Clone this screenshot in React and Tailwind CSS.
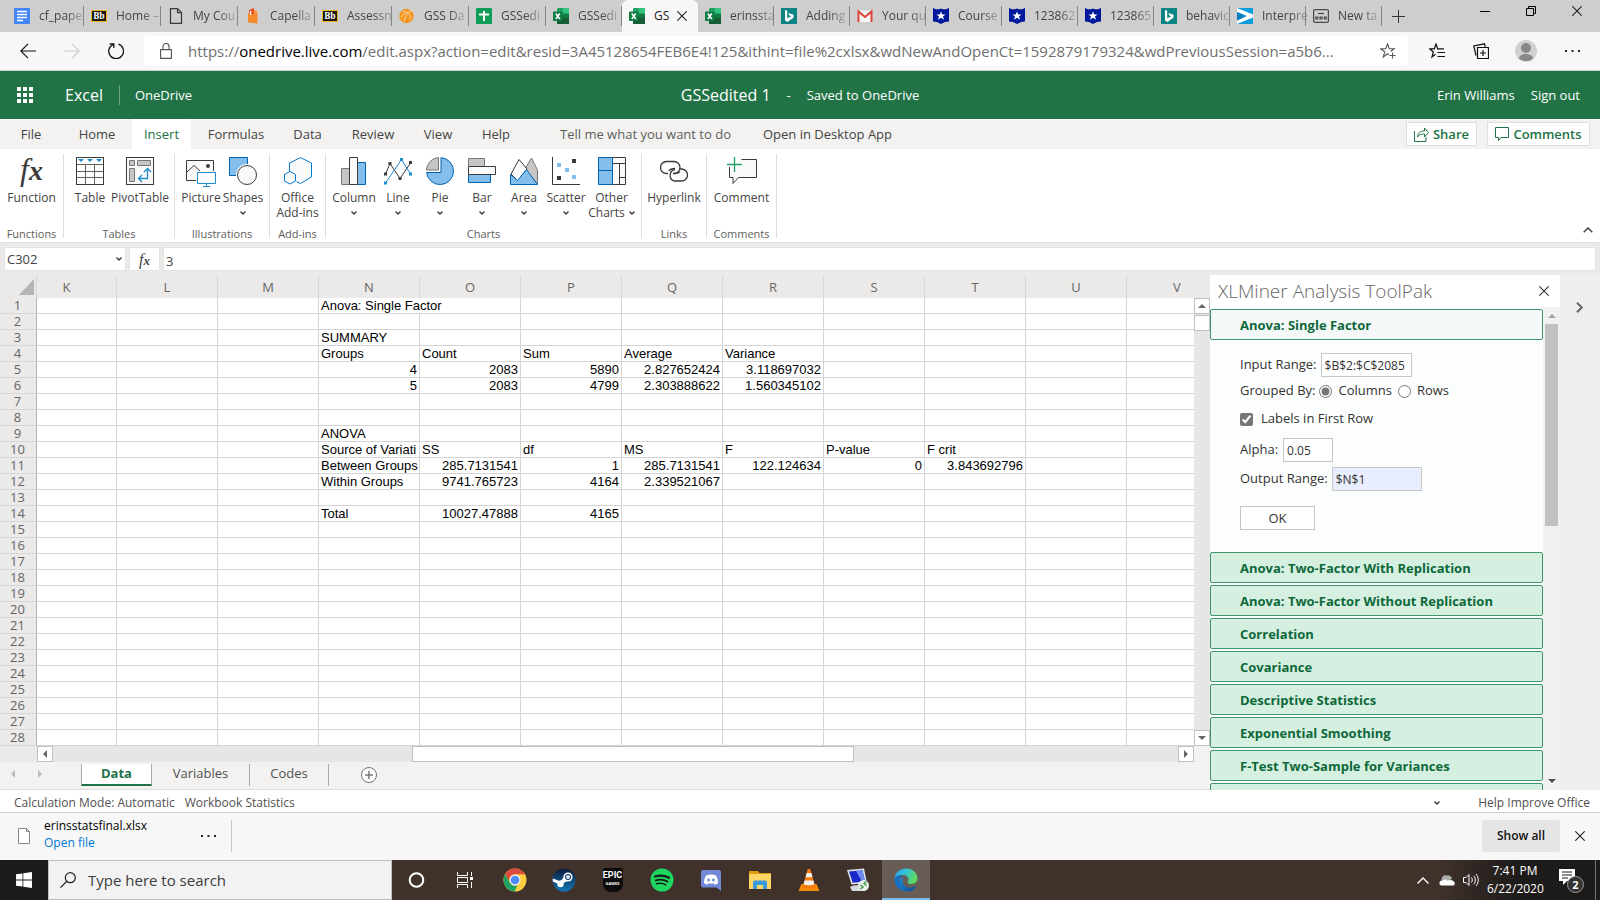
import React from "react";
import clsx from "clsx";

/* ---------- data ---------- */

const leftTabs = [
  { icon: "docs", title: "cf_pape" },
  { icon: "bb", title: "Home –" },
  { icon: "page", title: "My Cou" },
  { icon: "capella", title: "Capella" },
  { icon: "bb", title: "Assessn" },
  { icon: "gss", title: "GSS Da" },
  { icon: "sheets", title: "GSSedi" },
];

const rightTabs = [
  { icon: "excel", title: "GSSedi" },
  { icon: "excel", title: "GS", active: true },
  { icon: "excel", title: "erinssta" },
  { icon: "bing", title: "Adding" },
  { icon: "gmail", title: "Your qu" },
  { icon: "shield", title: "Course" },
  { icon: "shield", title: "123862" },
  { icon: "shield", title: "123865" },
  { icon: "bing", title: "behavic" },
  { icon: "interpret", title: "Interpre" },
  { icon: "newtab", title: "New ta" },
];

const ribbonTabs = [
  { label: "File", width: "w-[62px]" },
  { label: "Home", width: "w-[70px]" },
  { label: "Insert", width: "w-[59px]", active: true },
  { label: "Formulas", width: "w-[90px]" },
  { label: "Data", width: "w-[53px]" },
  { label: "Review", width: "w-[78px]" },
  { label: "View", width: "w-[52px]" },
  { label: "Help", width: "w-[64px]" },
];

const ribbonGroups = [
  { name: "Functions", width: "w-16", items: [{ icon: "fx", lines: ["Function"], width: "w-[63px]" }] },
  {
    name: "Tables",
    width: "w-[111px]",
    items: [
      { icon: "table", lines: ["Table"], width: "w-[42px]" },
      { icon: "pivot", lines: ["PivotTable"], width: "w-[58px]" },
    ],
  },
  {
    name: "Illustrations",
    width: "w-[95px]",
    items: [
      { icon: "picture", lines: ["Picture"], width: "w-[42px]" },
      { icon: "shapes", lines: ["Shapes"], width: "w-[42px]", menu: true },
    ],
  },
  { name: "Add-ins", width: "w-14", items: [{ icon: "office", lines: ["Office", "Add-ins"], width: "w-[55px]" }] },
  {
    name: "Charts",
    width: "w-[316px]",
    items: [
      { icon: "column", lines: ["Column"], width: "w-[46px]", menu: true },
      { icon: "line", lines: ["Line"], width: "w-[42px]", menu: true },
      { icon: "pie", lines: ["Pie"], width: "w-[42px]", menu: true },
      { icon: "bar", lines: ["Bar"], width: "w-[42px]", menu: true },
      { icon: "area", lines: ["Area"], width: "w-[42px]", menu: true },
      { icon: "scatter", lines: ["Scatter"], width: "w-[42px]", menu: true },
      { icon: "other", lines: ["Other", "Charts"], width: "w-[49px]", menu: true },
    ],
  },
  { name: "Links", width: "w-[65px]", items: [{ icon: "link", lines: ["Hyperlink"], width: "w-16" }] },
  { name: "Comments", width: "w-[70px]", items: [{ icon: "comment", lines: ["Comment"], width: "w-[69px]" }] },
];

const columns = ["K", "L", "M", "N", "O", "P", "Q", "R", "S", "T", "U", "V"];

const cells = {
  1: { N: "Anova: Single Factor" },
  3: { N: "SUMMARY" },
  4: { N: "Groups", O: "Count", P: "Sum", Q: "Average", R: "Variance" },
  5: { N: 4, O: 2083, P: 5890, Q: 2.827652424, R: 3.118697032 },
  6: { N: 5, O: 2083, P: 4799, Q: 2.303888622, R: 1.560345102 },
  9: { N: "ANOVA" },
  10: { N: "Source of Variati", O: "SS", P: "df", Q: "MS", R: "F", S: "P-value", T: "F crit" },
  11: { N: "Between Groups", O: 285.7131541, P: 1, Q: 285.7131541, R: 122.124634, S: 0, T: 3.843692796 },
  12: { N: "Within Groups", O: 9741.765723, P: 4164, Q: 2.339521067 },
  14: { N: "Total", O: 10027.47888, P: 4165 },
};

const tools = [
  "Anova: Two-Factor With Replication",
  "Anova: Two-Factor Without Replication",
  "Correlation",
  "Covariance",
  "Descriptive Statistics",
  "Exponential Smoothing",
  "F-Test Two-Sample for Variances",
];

/* ---------- icons ---------- */

const Favicon = ({ name }) => {
  switch (name) {
    case "docs":
      return (
        <svg className="size-4 shrink-0" viewBox="0 0 16 16">
          <rect width="16" height="16" rx="1" fill="#4285f4" />
          <path d="M3 3.5h10M3 6.5h10M3 9.5h10M3 12.5h6" stroke="#fff" strokeWidth="1.4" />
        </svg>
      );
    case "bb":
      return (
        <span className="flex h-3 w-4 shrink-0 items-center justify-center border border-[#f0b41c] bg-[#1c1a16] font-serif text-[9px] leading-none font-bold text-white">
          Bb
        </span>
      );
    case "page":
      return (
        <svg className="size-4 shrink-0" viewBox="0 0 16 16" fill="none" stroke="#3a3a3a" strokeWidth="1.2">
          <path d="M2.5.6h7l4 4v10.8h-11zM9.5.6v4h4" />
        </svg>
      );
    case "capella":
      return (
        <svg className="size-4 shrink-0" viewBox="0 0 16 16">
          <path d="M3 5h9.500v10.500L3 14.500z" fill="#f58a2a" />
          <path d="M4 2l5-2v6L4 7z" fill="#e8501f" />
          <path d="M5.500 3v4" stroke="#fff" strokeWidth="1.500" />
          <path d="M9 2l3.500 1v2H9z" fill="#f9a04a" />
        </svg>
      );
    case "gss":
      return (
        <svg className="size-4 shrink-0" viewBox="0 0 16 16">
          <circle cx="7.5" cy="8" r="7.2" fill="#f7941d" />
          <path d="M2 9c3-4 6-4 7-4s3 3 2 7M9 5c1-2 3-3 4-2M9 5c-2-2-4-2-5-1M8 6l-3 7" stroke="#fbd9a6" fill="none" />
        </svg>
      );
    case "sheets":
      return (
        <svg className="size-4 shrink-0" viewBox="0 0 16 16">
          <rect width="16" height="16" rx="1" fill="#0f9d58" />
          <path d="M8 3v10M3 6.5h10" stroke="#fff" strokeWidth="2" />
        </svg>
      );
    case "excel":
      return (
        <svg className="size-4 shrink-0" viewBox="0 0 16 16">
          <rect x="4" y="0" width="12" height="16" rx="1" fill="#21a366" />
          <path d="M10 0h6v5h-6z" fill="#33c481" />
          <path d="M4 8h12v8H4z" fill="#185c37" />
          <path d="M10 6h6v4h-6z" fill="#107c41" />
          <rect x="0" y="3.5" width="9.5" height="9.5" rx=".8" fill="#107c41" />
          <path d="M2.8 5.5l4 5.5M6.8 5.5l-4 5.5" stroke="#fff" strokeWidth="1.5" />
        </svg>
      );
    case "bing":
      return (
        <svg className="size-4 shrink-0" viewBox="0 0 16 16">
          <rect width="16" height="16" fill="#0c8484" />
          <path d="M4 2l2.2.8v7.4l4-2-2-1-.9-2.3 5.2 1.9v3L6.3 14 4 12.6z" fill="#fff" />
        </svg>
      );
    case "gmail":
      return (
        <svg className="size-4 shrink-0" viewBox="0 0 16 16">
          <rect x="1" y="2.5" width="14" height="11.5" fill="#f4f4f4" />
          <path d="M1.5 14V3.5L8 9l6.500-5.500V14" fill="none" stroke="#db4437" strokeWidth="2" />
        </svg>
      );
    case "shield":
      return (
        <svg className="size-4 shrink-0" viewBox="0 0 16 16">
          <path d="M0 0c3 1.600 5 1.600 8 .4C11 1.600 13 1.600 16 0v13.500c-3 0-5 .8-8 2.500-3-1.700-5-2.500-8-2.500z" fill="#00189c" />
          <path d="M8 3.500l1.300 3h3.200L10 8.500l1 3.200-3-1.900-3 1.900 1-3.200-2.500-2h3.200z" fill="#fff" />
        </svg>
      );
    case "interpret":
      return (
        <svg className="size-4 shrink-0" viewBox="0 0 16 16">
          <rect width="16" height="16" fill="#0f9bdc" />
          <path d="M0 0l16 6.500v3L0 16v-3.500L9.500 8 0 4z" fill="#fff" />
          <path d="M0 4l9.500 4L0 12.500z" fill="#0c7fc0" />
        </svg>
      );
    default:
      return (
        <svg className="size-4 shrink-0" viewBox="0 0 16 16" fill="none" stroke="#4a4a4a" strokeWidth="1.2">
          <rect x=".6" y="1.600" width="14.800" height="12.800" rx="1.500" />
          <path d="M5 5.500h6" />
          <path d="M2.800 9.100h1.900v1.900H2.800zM7 9.100h2v1.900H7zM11.300 9.100h1.900v1.900h-1.900z" />
        </svg>
      );
  }
};

const RibbonIcon = ({ name }) => {
  const dark = "#3b3a39";
  const blue = "#1e8bcd";
  switch (name) {
    case "fx":
      return (
        <span className="flex items-baseline font-['Liberation_Serif',serif] leading-6 text-[#3b3a39] italic">
          <span className="text-[32px]">f</span>
          <span className="text-[28px] font-bold">x</span>
        </span>
      );
    case "table":
      return (
        <svg className="size-7" viewBox="0 0 28 28" fill="none">
          <rect x=".5" y=".5" width="27" height="27" fill="#fff" stroke={dark} />
          <path d="M1 7.500h26M1 14.500h26M1 20.500h26M9.500 8v19M18.500 8v19" stroke="#605e5c" />
          <path d="M2 2h6l-3 3zM11 2h6l-3 3zM20 2h6l-3 3z" fill={blue} />
        </svg>
      );
    case "pivot":
      return (
        <svg className="size-7" viewBox="0 0 28 28" fill="none">
          <rect x=".5" y=".5" width="27" height="27" fill="#fafafa" stroke={dark} />
          <path d="M3.500 3.500h5v5h-5zM11.500 3.500h13v5h-13zM3.500 11.500h5v13h-5z" fill="#c8c6c4" stroke="#797775" />
          <path d="M13 21.500h8.500v-9M16 18l-3.500 3.500L16 25M18 15l3.500-3.500L25 15" stroke={blue} strokeWidth="1.300" />
        </svg>
      );
    case "picture":
      return (
        <svg className="h-[30px] w-[30px]" viewBox="0 0 30 30" fill="none">
          <path d="M10 23.500H.5v-20h27V14" fill="#fafafa" stroke={dark} />
          <path d="M1 15l7-6.500 6 5.500" stroke={dark} />
          <circle cx="22" cy="9" r="2" fill={dark} />
          <path d="M11.500 15.500h18v11h-18z" fill="#fff" stroke={blue} />
          <path d="M20.500 27v2.500M17 29.500h7" stroke={blue} />
        </svg>
      );
    case "shapes":
      return (
        <svg className="size-7" viewBox="0 0 28 28" fill="none">
          <path d="M.5.5h18v18H.5z" fill="#83beec" stroke="#0063b1" />
          <circle cx="18" cy="18" r="11" fill="#fff" />
          <circle cx="18" cy="18" r="9.500" fill="#fafafa" stroke={dark} />
        </svg>
      );
    case "office":
      return (
        <svg className="size-7" viewBox="0 0 28 28" fill="none" stroke="#0078d4">
          <path d="M5.500 14.500v-8.500L16.500.6 27.500 6v14L16.500 26.500l-4-1.800" fill="#fafafa" />
          <path d="M6 14.500l5.500 3v6.500l-5.500 3-5.500-3v-6.500z" fill="#fff" />
        </svg>
      );
    case "column":
      return (
        <svg className="size-7" viewBox="0 0 28 28" fill="none">
          <path d="M1.500 11.500h8v16h-8z" fill="#c8c6c4" stroke="#797775" />
          <path d="M17.500 5.500h8v22h-8z" fill="#83beec" stroke="#0063b1" />
          <path d="M9.500.5h8v27h-8z" fill="#fafafa" stroke={dark} />
        </svg>
      );
    case "line":
      return (
        <svg className="size-7" viewBox="0 0 28 28" fill="none">
          <path d="M1.500 17L6 6.500 16 21.500 26.500 6" stroke={dark} />
          <path d="M1.500 26L17.500 2.500 26.500 17" stroke={blue} />
          <path d="M0 15.500h3v3H0zM4.500 5h3v3h-3zM14.500 20h3v3h-3zM25 4h3v3h-3z" fill={dark} />
          <path d="M0 24.500h3v3H0zM16 1h3v3h-3zM25 15.500h3v3h-3z" fill={blue} />
        </svg>
      );
    case "pie":
      return (
        <svg className="size-7" viewBox="0 0 28 28" fill="none">
          <path d="M15 .6A13.500 13.500 0 1 1 .6 15.500H15z" fill="#83beec" stroke="#0063b1" />
          <path d="M12.500.5v12.500H.5A13 13 0 0 1 12.500.5z" fill="#c8c6c4" stroke="#797775" />
        </svg>
      );
    case "bar":
      return (
        <svg className="size-7" viewBox="0 0 28 28" fill="none">
          <path d="M.5 1.500h16v8H.5z" fill="#c8c6c4" stroke="#797775" />
          <path d="M.5 17.500h22v8H.5z" fill="#83beec" stroke="#0063b1" />
          <path d="M.5 9.500h27v8H.5z" fill="#fafafa" stroke={dark} />
        </svg>
      );
    case "area":
      return (
        <svg className="size-7" viewBox="0 0 28 28" fill="none">
          <path d="M15 12L21.500 1l6 12v14z" fill="#c8c6c4" stroke="#797775" />
          <path d="M1 17L9 2.500 17 12 8 24z" fill="#fafafa" stroke={dark} />
          <path d="M.5 27.500V17.500l7 6 9-11 11 15z" fill="#83beec" stroke="#0063b1" />
        </svg>
      );
    case "scatter":
      return (
        <svg className="size-7" viewBox="0 0 28 28">
          <path d="M.5 0v27.500H28" fill="none" stroke={dark} />
          <path d="M5 6h4v4H5zM13 11h4v4h-4zM20 18h4v4h-4z" fill="#83beec" />
          <path d="M20 2h4v4h-4zM5 19h4v4H5z" fill={dark} />
        </svg>
      );
    case "other":
      return (
        <svg className="size-7" viewBox="0 0 28 28" fill="none">
          <path d="M14.500.5h13v27h-13zM14.500 6.500h13M21.500 6.500v21M21.500 20.500h6" fill="#fafafa" stroke={dark} />
          <path d="M.5.5h14v27H.5zM.5 13.500h14" fill="#83beec" stroke="#0063b1" />
        </svg>
      );
    case "link":
      return (
        <svg className="size-7" viewBox="0 0 28 28" fill="none" stroke={dark} strokeWidth="1.300">
          <path d="M8 16.500h-1.500a6 6 0 0 1 0-12H14a6 6 0 0 1 0 12h-1" />
          <path d="M15 12.500a6 6 0 0 0-1 11.500h7.500a6 6 0 0 0 0-12H20" />
          <path d="M9 14c1-2 3-2.500 6-2.500M20 14.500c-1 1.800-3 2-6 2" />
        </svg>
      );
    default:
      return (
        <svg className="h-[30px] w-[30px]" viewBox="0 0 30 30" fill="none">
          <path d="M14.500 2.500h15v18H11.500L6 26.500v-6H2.500V10" fill="#fafafa" stroke={dark} />
          <path d="M7.500 0v15M0 7.500h15" stroke="#fff" strokeWidth="4" />
          <path d="M7.500 0v15M0 7.500h15" stroke="#21a366" strokeWidth="1.300" />
        </svg>
      );
  }
};

const Caret = ({ className }) => (
  <svg className={clsx("h-1 w-[6px]", className)} viewBox="0 0 6 4" fill="none" stroke="#3b3a39" strokeWidth="1.400">
    <path d="M.5.5L3 3 5.500.5" />
  </svg>
);

const Cross = ({ className }) => (
  <svg className={clsx("size-[10px]", className)} viewBox="0 0 10 10" stroke="currentColor" strokeWidth="1.100">
    <path d="M.3.3l9.400 9.400M9.700.3L.3 9.700" />
  </svg>
);

const arrowPaths = {
  up: "M0 6l4-4 4 4z",
  down: "M0 2l4 4 4-4z",
  left: "M6 0v8L2 4z",
  right: "M2 0v8l4-4z",
};

const Arrow = ({ dir, className }) => (
  <svg className={clsx("size-2", className)} viewBox="0 0 8 8" fill="currentColor">
    <path d={arrowPaths[dir]} />
  </svg>
);

const ScrollButton = ({ dir }) => (
  <button
    aria-label={`Scroll ${dir}`}
    className="flex size-4 shrink-0 items-center justify-center border border-[#c0c0c0] bg-white text-[#666]"
  >
    <Arrow dir={dir} />
  </button>
);

const Dots = ({ className }) => (
  <svg className={clsx("h-[2px] w-[15px]", className)} viewBox="0 0 15 2" fill="currentColor">
    <path d="M0 0h2v2H0zM6.500 0h2v2h-2zM13 0h2v2h-2z" />
  </svg>
);

/* ---------- browser chrome ---------- */

const BrowserTab = ({ tab, width }) => (
  <div
    className={clsx(
      "relative flex h-8 shrink-0 items-center",
      width,
      tab.active ? "rounded-t-md bg-[#f7f7f7]" : "text-[#444]"
    )}
  >
    <button className="flex min-w-0 flex-1 items-center gap-[9px] pl-[7px]">
      <Favicon name={tab.icon} />
      <span
        className={clsx(
          "text-xs leading-5 whitespace-nowrap",
          !tab.active && "[mask-image:linear-gradient(to_right,#000_60%,#0004)]"
        )}
      >
        {tab.title}
      </span>
    </button>
    {tab.active ? (
      <button aria-label="Close tab" className="absolute right-[11px]">
        <Cross className="size-[9px]" />
      </button>
    ) : (
      <span className="h-5 w-px shrink-0 bg-[#858585]" />
    )}
  </div>
);

const TabStrip = () => (
  <div className="flex h-8 bg-[#cecece] pl-[7px]">
    {leftTabs.map((tab, i) => (
      <BrowserTab key={i} tab={tab} width="w-[77px]" />
    ))}
    {rightTabs.map((tab, i) => (
      <BrowserTab key={i} tab={tab} width="w-[76px]" />
    ))}
    <button aria-label="New tab" className="ml-[10px] self-center">
      <svg className="size-[13px]" viewBox="0 0 13 13" stroke="#333">
        <path d="M6.500 0v13M0 6.500h13" />
      </svg>
    </button>
    <div className="mr-[18px] ml-auto flex h-[22px] items-center gap-9">
      <button aria-label="Minimize" className="h-px w-[10px] bg-black" />
      <button aria-label="Restore">
        <svg className="size-[10px]" viewBox="0 0 10 10" fill="none" stroke="#000">
          <path d="M.5 2.500h7v7h-7zM2.500 2.500v-2h7v7h-2" />
        </svg>
      </button>
      <button aria-label="Close">
        <Cross />
      </button>
    </div>
  </div>
);

const AddressBar = () => (
  <div className="flex h-[39px] items-center border-b border-[#cfcfcf] bg-[#f7f7f7] pr-5 pl-5 text-[#222]">
    <button aria-label="Back">
      <svg className="size-4" viewBox="0 0 16 16" fill="none" stroke="#111" strokeWidth="1.200">
        <path d="M16 8H1M8 .8L.8 8 8 15.200" />
      </svg>
    </button>
    <button aria-label="Forward" className="ml-7">
      <svg className="size-4" viewBox="0 0 16 16" fill="none" stroke="#ccc" strokeWidth="1.200">
        <path d="M0 8h15M8 .8L15.200 8 8 15.200" />
      </svg>
    </button>
    <button aria-label="Refresh" className="ml-7">
      <svg className="size-4" viewBox="0 0 16 16" fill="none" stroke="#111" strokeWidth="1.300">
        <path d="M10.500 1.200A7.400 7.400 0 1 1 5 1.500M1.500.8h4.300v4.300" />
      </svg>
    </button>
    <div className="ml-5 flex h-[30px] min-w-0 flex-1 items-center rounded bg-white pr-3 pl-4">
      <svg className="h-4 w-3 shrink-0" viewBox="0 0 12 16" fill="none" stroke="#555" strokeWidth="1.100">
        <path d="M.6 6.600h10.800v8.800H.6zM3 6.500V3.500a3 3 0 0 1 6 0v3" />
      </svg>
      <p className="ml-4 flex-1 overflow-hidden text-[15px] leading-6 whitespace-nowrap text-[#6f6f6f]">
        https://<span className="text-black">onedrive.live.com</span>
        /edit.aspx?action=edit&amp;resid=3A45128654FEB6E4!125&amp;ithint=file%2cxlsx&amp;wdNewAndOpenCt=1592879179324&amp;wdPreviousSession=a5b6...
      </p>
      <button aria-label="Add to favorites">
        <svg className="size-4" viewBox="0 0 16 16" fill="none" stroke="#555" strokeWidth="1.100">
          <path d="M9 11.500L7.500 10.700 3.200 14l1.500-5.200L.8 5.800h4.900L7.500 1l1.800 4.800h4.900l-3.500 2.700M12.500 9.500v6M9.500 12.500h6" />
        </svg>
      </button>
    </div>
    <button aria-label="Favorites" className="ml-[21px]">
      <svg className="size-4" viewBox="0 0 16 16" fill="none" stroke="#111" strokeWidth="1.200">
        <path d="M6.500 11.300L3 14l1.300-5L.8 5.800h4.500L7 1l1.700 4.800H15M8.500 9.500H16M8.500 13.500H16" />
      </svg>
    </button>
    <button aria-label="Collections" className="ml-7">
      <svg className="size-4" viewBox="0 0 16 16" fill="none" stroke="#111" strokeWidth="1.200">
        <path d="M4.500 4.500h11v11h-11zM10 7v6M7 10h6M3 12.500L.8 3 11.500.8l.8 3" />
      </svg>
    </button>
    <button aria-label="Profile" className="ml-[26px]">
      <svg className="size-[22px]" viewBox="0 0 22 22">
        <circle cx="11" cy="11" r="11" fill="#d2d0ce" />
        <circle cx="11" cy="8" r="5" fill="#8a8886" />
        <path d="M4 18.500c0-6 14-6 14 0a11 11 0 0 1-14 0z" fill="#8a8886" />
      </svg>
    </button>
    <button aria-label="Settings and more" className="ml-7">
      <Dots />
    </button>
  </div>
);

/* ---------- excel ---------- */

const AppHeader = () => (
  <header className="grid h-12 grid-cols-[1fr_auto_1fr] items-center bg-[#217346] text-[13px] text-white">
    <div className="flex items-center pl-[17px]">
      <button aria-label="App launcher">
        <svg className="size-4" viewBox="0 0 16 16" fill="#fff">
          <path d="M0 0h4v4H0zM6 0h4v4H6zM12 0h4v4h-4zM0 6h4v4H0zM6 6h4v4H6zM12 6h4v4h-4zM0 12h4v4H0zM6 12h4v4H6zM12 12h4v4h-4z" />
        </svg>
      </button>
      <a href="#excel" className="ml-8 text-base">Excel</a>
      <span className="ml-4 h-5 w-px bg-[#6aa384]" />
      <a href="#onedrive" className="ml-[15px] pt-[2px]">OneDrive</a>
    </div>
    <div className="flex items-center">
      <h1 className="text-base">GSSedited 1</h1>
      <span className="mx-4 pt-[2px]">-</span>
      <span className="pt-[2px]">Saved to OneDrive</span>
    </div>
    <div className="flex justify-end gap-4 pt-[2px] pr-5">
      <a href="#account">Erin Williams</a>
      <a href="#signout">Sign out</a>
    </div>
  </header>
);

const RibbonTabs = () => (
  <div className="flex h-[30px] bg-[#f3f2f1] text-[13px] text-[#444]">
    {ribbonTabs.map((tab) => (
      <button
        key={tab.label}
        className={clsx("pt-[2px] whitespace-nowrap", tab.width, tab.active && "bg-white text-[#217346]")}
      >
        {tab.label}
      </button>
    ))}
    <button className="ml-8 w-[174px] pt-[2px] text-left whitespace-nowrap text-[#605e5c]">Tell me what you want to do</button>
    <button className="ml-[29px] pt-[2px] whitespace-nowrap">Open in Desktop App</button>
    <div className="mr-[10px] ml-auto flex items-center gap-[10px] font-semibold text-[#217346]">
      <button className="flex h-6 w-[71px] items-center justify-center gap-1 border border-[#e1dfdd] bg-white">
        <svg className="size-[15px]" viewBox="0 0 15 15" fill="none" stroke="#217346">
          <path d="M.5 4v10.500h11.500V10M3.500 10c0-4 2.500-6 7-6V1l4 4.500-4 4.500V7C7 7 5 7.500 3.500 10z" />
        </svg>
        <span className="pt-[2px]">Share</span>
      </button>
      <button className="flex h-6 w-[103px] items-center justify-center gap-1 border border-[#e1dfdd] bg-white">
        <svg className="size-[14px]" viewBox="0 0 14 14" fill="none" stroke="#217346">
          <path d="M.5.500h13v10H6L3.500 13.500v-3h-3z" />
        </svg>
        <span className="pt-[2px]">Comments</span>
      </button>
    </div>
  </div>
);

const RibbonButton = ({ item }) => (
  <button className={clsx("flex shrink-0 flex-col items-center", item.width)}>
    <span className="flex h-[33px] shrink-0 items-start justify-center">
      <RibbonIcon name={item.icon} />
    </span>
    {item.lines.map((line, i) => (
      <span key={line} className="flex items-center gap-1 leading-[15px] whitespace-nowrap">
        {line}
        {i === 1 && item.menu && <Caret />}
      </span>
    ))}
    {item.menu && item.lines.length === 1 && <Caret className="mt-[6px]" />}
  </button>
);

const Ribbon = () => (
  <div className="flex h-[94px] border-b border-[#e1dfdd] bg-white pt-[5px] text-xs text-[#444]">
    {ribbonGroups.map((group) => (
      <div key={group.name} className={clsx("flex h-[84px] shrink-0 flex-col border-r border-[#e1dfdd]", group.width)}>
        <div className="flex h-[72px] shrink-0 justify-center pt-[3px]">
          {group.items.map((item) => (
            <RibbonButton key={item.icon} item={item} />
          ))}
        </div>
        <div className="text-center text-[11px] leading-4 text-[#605e5c]">{group.name}</div>
      </div>
    ))}
    <button aria-label="Collapse ribbon" className="mr-[7px] mb-[9px] ml-auto self-end">
      <svg className="h-[6px] w-[10px]" viewBox="0 0 10 6" fill="none" stroke="#444" strokeWidth="1.500">
        <path d="M.7 5.300L5 1l4.300 4.300" />
      </svg>
    </button>
  </div>
);

const FormulaBar = () => (
  <div className="flex h-8 bg-[#ebeae9] px-1 pt-1 pb-1 text-[13px] text-[#444]">
    <div className="flex h-6 w-[122px] items-center border border-[#e1e3e5] bg-white pr-[3px]">
      <input aria-label="Name box" defaultValue="C302" className="w-full min-w-0 pt-px pl-[2px] outline-none" />
      <Caret className="shrink-0" />
    </div>
    <button
      aria-label="Insert function"
      className="ml-[3px] flex h-6 w-[31px] items-baseline justify-center border border-[#e1e3e5] bg-white font-['Liberation_Serif',serif] leading-5 italic"
    >
      <span className="text-base">f</span>
      <span className="text-[13px] font-bold">x</span>
    </button>
    <input
      aria-label="Formula"
      defaultValue="3"
      className="ml-[3px] h-6 min-w-0 flex-1 border border-[#e1e3e5] bg-white pt-1 pl-[2px] outline-none"
    />
  </div>
);

const Cell = ({ value, span }) => (
  <td
    colSpan={span}
    className={clsx(
      "h-4 overflow-hidden border-r border-b border-[#d4d4d4] bg-white px-[2px] py-0 leading-[15px] whitespace-nowrap",
      typeof value === "number" && "text-right"
    )}
  >
    {value}
  </td>
);

const Grid = () => (
  <table className="w-[1228px] table-fixed border-separate border-spacing-0 font-['Liberation_Sans',Arial,sans-serif] text-[13px] text-black">
    <colgroup>
      <col className="w-[37px]" />
      <col className="w-20" />
      {columns.slice(1).map((c) => (
        <col key={c} className="w-[101px]" />
      ))}
    </colgroup>
    <thead className="bg-[#ebeae9] font-['Open_Sans',sans-serif] text-[#666]">
      <tr>
        <th className="h-[23px] border-r border-[#d4d4d4] p-0 align-bottom">
          <svg className="mb-[3px] ml-[19px] h-4 w-[15px]" viewBox="0 0 15 16" fill="#b4b4b4">
            <path d="M15 0v16H0z" />
          </svg>
        </th>
        {columns.map((c) => (
          <th key={c} className={clsx("border-r border-[#d8d8d8] pt-[2px] pb-0 font-normal", c === "K" ? "pr-[20px]" : "px-0")}>
            {c}
          </th>
        ))}
      </tr>
    </thead>
    <tbody>
      {Array.from({ length: 28 }, (_, i) => i + 1).map((row) => (
        <tr key={row}>
          <th className="h-4 border-r border-b border-r-[#b4b4b4] border-b-[#d8d8d8] bg-[#ebeae9] p-0 pr-px font-['Open_Sans',sans-serif] leading-[15px] font-normal text-[#666]">
            {row}
          </th>
          {columns.map((c) =>
            row === 1 && c === "O" ? null : (
              <Cell key={c} value={cells[row]?.[c]} span={row === 1 && c === "N" ? 2 : undefined} />
            )
          )}
        </tr>
      ))}
    </tbody>
  </table>
);

const SheetTabs = () => (
  <div className="flex h-7 items-start border-b border-[#e1dfdd] bg-[#f3f2f1] text-[13px] text-[#505050]">
    <button aria-label="Previous sheet" className="mt-2 ml-[9px] text-[#bbb]">
      <Arrow dir="left" />
    </button>
    <button aria-label="Next sheet" className="mt-2 ml-[19px] text-[#bbb]">
      <Arrow dir="right" />
    </button>
    <div className="mt-[2px] ml-[37px] flex h-[22px]">
      <button className="w-[71px] border-r border-b-2 border-l border-x-[#aaa] border-b-[#217346] bg-white pb-1 font-bold text-[#217346]">
        Data
      </button>
      <button className="w-[98px] border-r border-[#aaa] pb-1">Variables</button>
      <button className="w-[79px] border-r border-[#aaa] pb-1">Codes</button>
    </div>
    <button aria-label="New sheet" className="mt-[5px] ml-8">
      <svg className="size-4" viewBox="0 0 16 16" fill="none" stroke="#777">
        <circle cx="8" cy="8" r="7.500" fill="#fff" />
        <path d="M8 4v8M4 8h8" strokeWidth="1.500" />
      </svg>
    </button>
  </div>
);

const Worksheet = () => (
  <main className="flex min-w-0 flex-1 flex-col bg-[#e6e6e6]">
    <div className="flex">
      <div className="min-w-0 flex-1 overflow-hidden">
        <Grid />
      </div>
      <div className="flex w-4 flex-col">
        <div className="h-[23px] bg-[#ebeae9]" />
        <ScrollButton dir="up" />
        <div className="mt-px h-4 border border-[#c0c0c0] bg-white" />
        <div className="flex-1" />
        <ScrollButton dir="down" />
      </div>
    </div>
    <div className="flex h-4">
      <div className="w-[37px] bg-[#ebeae9]" />
      <ScrollButton dir="left" />
      <div className="flex flex-1">
        <div className="flex-[359]" />
        <div className="flex-[441] border border-[#c0c0c0] bg-white" />
        <div className="flex-[324]" />
      </div>
      <ScrollButton dir="right" />
      <div className="w-4 bg-[#f3f2f1]" />
    </div>
    <SheetTabs />
  </main>
);

const fieldClass = "h-6 border border-[#c6c6c6] px-[3px] pt-px text-xs outline-none";

const ToolPak = () => (
  <aside className="flex w-[350px] shrink-0 flex-col bg-white text-[13px] text-[#333]">
    <div className="flex h-8 items-center justify-between pr-[11px] pl-2">
      <h2 className="text-[19px] leading-8 font-light text-[#666]">XLMiner Analysis ToolPak</h2>
      <button aria-label="Close pane">
        <Cross className="size-[9px]" />
      </button>
    </div>
    <div className="flex h-0 grow">
      <div className="flex flex-1 flex-col overflow-hidden bg-[#fcfefd]">
        <button className="mt-[2px] h-[31px] shrink-0 rounded-[2px] border border-[#419568] bg-[#f4f8f9] pt-[2px] pl-[29px] text-left font-bold text-[#0e6839]">
          Anova: Single Factor
        </button>
        <form className="h-[212px] shrink-0 pt-[13px] pl-[30px]" onSubmit={(e) => e.preventDefault()}>
          <div className="flex h-6 items-center gap-1">
            <label htmlFor="input-range">Input Range:</label>
            <input id="input-range" defaultValue="$B$2:$C$2085" className={clsx(fieldClass, "w-[91px] bg-white")} />
          </div>
          <div className="mt-[2px] flex h-6 items-center">
            <span>Grouped By:</span>
            <input type="radio" name="grouped" id="columns" defaultChecked className="mr-[6px] ml-1 size-[13px] accent-[#767676]" />
            <label htmlFor="columns">Columns</label>
            <input type="radio" name="grouped" id="rows" className="mr-[6px] ml-[6px] size-[13px]" />
            <label htmlFor="rows">Rows</label>
          </div>
          <div className="mt-1 flex h-6 items-center gap-2">
            <input type="checkbox" id="labels" defaultChecked className="size-[13px] accent-[#767676]" />
            <label htmlFor="labels">Labels in First Row</label>
          </div>
          <div className="mt-[7px] flex h-6 items-center gap-[5px]">
            <label htmlFor="alpha">Alpha:</label>
            <input id="alpha" defaultValue="0.05" className={clsx(fieldClass, "w-[50px] bg-white")} />
          </div>
          <div className="mt-[5px] flex h-6 items-center gap-1">
            <label htmlFor="output-range">Output Range:</label>
            <input id="output-range" defaultValue="$N$1" className={clsx(fieldClass, "w-[90px] bg-[#e8eefd]")} />
          </div>
          <button type="submit" className="mt-[15px] h-6 w-[75px] border border-[#c6c6c6] bg-white pt-px">
            OK
          </button>
        </form>
        {tools.map((tool) => (
          <button
            key={tool}
            className="mb-[2px] h-[31px] shrink-0 rounded-[2px] border border-[#419568] bg-[#d5f0e1] pt-[2px] pl-[29px] text-left font-bold text-[#0e6839]"
          >
            {tool}
          </button>
        ))}
        <button aria-label="Next tool" className="h-[31px] shrink-0 rounded-[2px] border border-[#419568] bg-[#d5f0e1]" />
      </div>
      <div className="flex w-[17px] flex-col items-center bg-[#f1f1f1] py-[5px]">
        <Arrow dir="up" className="text-[#a3a3a3]" />
        <div className="mt-1 h-[202px] w-[13px] bg-[#c1c1c1]" />
        <Arrow dir="down" className="mt-auto text-[#505050]" />
      </div>
    </div>
  </aside>
);

const StatusBar = () => (
  <div className="flex h-[23px] items-center gap-[10px] border-b border-[#cfcfcf] bg-white pt-[3px] pr-[10px] pl-[14px] text-xs text-[#505050]">
    <span>Calculation Mode: Automatic</span>
    <a href="#stats">Workbook Statistics</a>
    <Caret className="mr-[28px] ml-auto" />
    <a href="#help">Help Improve Office</a>
  </div>
);

/* ---------- downloads + taskbar ---------- */

const DownloadBar = () => (
  <div className="flex h-[47px] items-center bg-[#f7f7f7] pb-[2px] pl-[18px] text-xs">
    <svg className="h-4 w-3" viewBox="0 0 12 16" fill="#fff" stroke="#888">
      <path d="M.5.5h8l3 3v12H.5zM8.500.5v3h3" />
    </svg>
    <div className="mb-1 ml-[14px] w-[157px] leading-[17px]">
      <p className="text-black">erinsstatsfinal.xlsx</p>
      <a href="#open" className="text-[#0078d4]">Open file</a>
    </div>
    <button aria-label="More options">
      <Dots />
    </button>
    <span className="ml-[15px] h-8 w-px bg-[#c8c8c8]" />
    <button className="ml-auto h-8 w-[78px] rounded-[2px] bg-[#e5e5e5] font-semibold text-[#111]">Show all</button>
    <button aria-label="Close downloads" className="mr-[15px] ml-[15px]">
      <Cross />
    </button>
  </div>
);

const TaskIcon = ({ name }) => {
  switch (name) {
    case "Cortana":
      return (
        <svg className="size-6" viewBox="0 0 24 24" fill="none">
          <circle cx="11.500" cy="12" r="6.800" stroke="#fff" strokeWidth="2" />
        </svg>
      );
    case "Task View":
      return (
        <svg className="size-6" viewBox="0 0 24 24" fill="none" stroke="#fff">
          <path d="M3.500 4v3.500h10V4M3.500 20v-3.500h10V20M3.500 9.500h10v5h-10zM17.500 4v4M17.500 14v6" />
          <path d="M16 9h3v3h-3z" fill="#fff" stroke="none" />
        </svg>
      );
    case "Chrome":
      return (
        <svg className="size-6" viewBox="0 0 24 24">
          <circle cx="12" cy="12" r="11.500" fill="#ffcd40" />
          <path d="M2 6.300A11.500 11.500 0 0 1 22 6.300H12a5.700 5.700 0 0 0-5 8.500z" fill="#dd4b3e" />
          <path d="M2 6.300l5 8.500A5.700 5.700 0 0 0 14.500 17L11.500 23.500A11.500 11.500 0 0 1 2 6.300z" fill="#1da362" />
          <circle cx="12" cy="12" r="5.500" fill="#f1f1f1" />
          <circle cx="12" cy="12" r="4.300" fill="#4c8bf5" />
        </svg>
      );
    case "Steam":
      return (
        <svg className="size-6" viewBox="0 0 24 24">
          <defs>
            <linearGradient id="steam" x1="0" y1="0" x2="0" y2="1">
              <stop offset="0" stopColor="#0c1b3a" />
              <stop offset="1" stopColor="#1378b8" />
            </linearGradient>
          </defs>
          <circle cx="12" cy="12" r="11.500" fill="url(#steam)" />
          <path d="M.8 13.500l6.500 2.700 5-1.500 5-3-4-5-3.800 5.500L7 12.700.7 10.500z" fill="#fff" />
          <circle cx="8.500" cy="16" r="3.200" fill="#fff" />
          <circle cx="16" cy="9" r="4.600" fill="#fff" />
          <circle cx="16" cy="9" r="3" fill="#16386a" />
          <circle cx="16" cy="9" r="2" fill="#e8edf2" />
        </svg>
      );
    case "Epic Games":
      return (
        <span className="flex h-6 w-5 flex-col items-center rounded-[2px] rounded-b-lg bg-[#0c0c0c] pt-[2px] text-white">
          <span className="font-['Roboto',sans-serif] text-[9px] leading-[11px] font-bold">EPIC</span>
          <span className="text-[4px] leading-[5px] font-bold">GAMES</span>
        </span>
      );
    case "Spotify":
      return (
        <svg className="size-6" viewBox="0 0 24 24" fill="none" stroke="#1b1b1b" strokeLinecap="round">
          <circle cx="12" cy="12" r="11.500" fill="#1ed760" stroke="none" />
          <path d="M5 8.500c5-1.500 10-1 14 1.300" strokeWidth="2.200" />
          <path d="M5.800 12.300c4-1.200 8.200-.8 11.600 1.200" strokeWidth="1.900" />
          <path d="M6.500 15.800c3.500-.9 6.500-.6 9.300 1" strokeWidth="1.500" />
        </svg>
      );
    case "Discord":
      return (
        <svg className="size-6" viewBox="0 0 24 24">
          <path d="M4 2h16a2 2 0 0 1 2 2v19l-4.500-3.500H4a2 2 0 0 1-2-2V4a2 2 0 0 1 2-2z" fill="#7289da" />
          <path d="M7 7.500c3-1.500 7-1.500 10 0 1.500 2.500 2 5 2 7.500-1 1-2.500 1.500-3.500 1.500l-.8-1.200c-1.800.5-3.600.5-5.400 0L8.500 16.500c-1 0-2.500-.5-3.500-1.500 0-2.500.5-5 2-7.500z" fill="#fff" />
          <circle cx="9.600" cy="12" r="1.400" fill="#7289da" />
          <circle cx="14.400" cy="12" r="1.400" fill="#7289da" />
        </svg>
      );
    case "File Explorer":
      return (
        <svg className="size-6" viewBox="0 0 24 24">
          <path d="M1 3h9l1.500 2H23v5H1z" fill="#dea012" />
          <path d="M1 6h22v15H1z" fill="#ffd766" />
          <path d="M5 21v-6.500a2 2 0 0 1 2-2h10a2 2 0 0 1 2 2V21h-4v-4H9v4z" fill="#3a9bdc" />
        </svg>
      );
    case "VLC":
      return (
        <svg className="size-6" viewBox="0 0 24 24">
          <path d="M4.500 16h15l3 7H1.500z" fill="#f58a07" />
          <path d="M10.700 1h2.600l5 18c-3 2-9.600 2-12.600 0z" fill="#f47c0a" />
          <path d="M9.800 5h4.500l1.200 4.200H8.600zM7.600 12.500h8.800l1 3.800c-3 1.300-7.800 1.300-10.900 0z" fill="#f2f2f2" />
        </svg>
      );
    case "Remote Desktop":
      return (
        <svg className="size-6" viewBox="0 0 24 24">
          <path d="M4 19c3-2.500 10-2.500 15 0v4H6z" fill="#d5d8dc" />
          <path d="M1 2l17-1.500 3 14.500-15.500 1.500z" fill="#dfe3e8" />
          <path d="M3 3.500l13.500-1.300L19 13.500 6.700 14.800z" fill="#1727c9" />
          <path d="M10 2.900l6.500-.7L19 13.500l-3 .3z" fill="#6d8df0" />
          <circle cx="17.500" cy="17.500" r="5.500" fill="#e9ece9" />
          <path d="M14.500 17l2.500 2-2.500 2M20.500 13.500L18 15.500l2.500 2" stroke="#2f9a3c" strokeWidth="1.300" fill="none" />
        </svg>
      );
    default:
      return (
        <svg className="size-6" viewBox="0 0 24 24">
          <defs>
            <linearGradient id="edge-top" x1="0" y1="0" x2="1" y2=".3">
              <stop offset="0" stopColor="#2a9fe0" />
              <stop offset=".5" stopColor="#33c3d8" />
              <stop offset="1" stopColor="#5fd95f" />
            </linearGradient>
            <linearGradient id="edge-low" x1="0" y1="0" x2="1" y2="1">
              <stop offset="0" stopColor="#1b8ddc" />
              <stop offset="1" stopColor="#114a8b" />
            </linearGradient>
          </defs>
          <path d="M.5 11C1 4.500 6 .5 12 .5c7 0 11.500 5 11.500 9.800 0 3.700-2.800 5.700-6 5.700-2.500 0-4-.9-4-1.700 0-.6 1-1 1-2.800 0-2.500-2.500-4.500-6-4.500-4 0-7 2-8 4z" fill="url(#edge-top)" />
          <path d="M.5 11C1.500 8 5 6.500 8.500 7c-2 1.500-3 4-2.800 7 .3 4 3.500 7.500 7.300 9C6 24 .5 18.500.5 11z" fill="#1572c2" />
          <path d="M9.500 9c-2 4-.5 9.500 5 10.500 3 .5 5.500-.5 7-1.500.5-.3 1 .2.700.7C20 22 16.500 24 12.500 23.500 8 22.500 5.500 18.500 5.700 14 5.800 11.500 7.500 9.500 9.500 9z" fill="url(#edge-low)" />
        </svg>
      );
  }
};

const apps = [
  "Cortana",
  "Task View",
  "Chrome",
  "Steam",
  "Epic Games",
  "Spotify",
  "Discord",
  "File Explorer",
  "VLC",
  "Remote Desktop",
  "Edge",
];

const Taskbar = () => (
  <footer className="flex h-10 items-stretch bg-[#40312b] text-white">
    <button aria-label="Start" className="flex w-12 items-center justify-center bg-[#1b1b1b]">
      <svg className="size-4" viewBox="0 0 16 16" fill="#fff">
        <path d="M0 2.300L6.500 1.400v6.100H0zM7.300 1.300L16 0v7.500H7.300zM0 8.400h6.500v6.200L0 13.700zM7.300 8.400H16V16l-8.700-1.300z" />
      </svg>
    </button>
    <div className="flex w-[344px] items-center border border-[#bdbdbd] bg-[#f2f2f2] pl-[11px]">
      <svg className="size-4 shrink-0" viewBox="0 0 16 16" fill="none" stroke="#222" strokeWidth="1.200">
        <circle cx="10.300" cy="5.700" r="5" />
        <path d="M6.800 9.300L.4 15.600" />
      </svg>
      <input
        aria-label="Search"
        placeholder="Type here to search"
        className="ml-3 min-w-0 flex-1 text-[15px] outline-none placeholder:text-[#3c3c3c]"
      />
    </div>
    {apps.map((app) => (
      <button
        key={app}
        aria-label={app}
        className={clsx(
          "flex shrink-0 items-center justify-center",
          app === "Edge" ? "w-12 border-b-2 border-[#76b9ed] bg-[#685c57] pt-[2px]" : "w-[49px]"
        )}
      >
        <TaskIcon name={app} />
      </button>
    ))}
    <div className="flex flex-1 items-center justify-end bg-linear-to-l from-[#1d1b1a] from-12% to-[#40312b] to-24%">
      <button aria-label="Show hidden icons">
        <svg className="h-[7px] w-3" viewBox="0 0 12 7" fill="none" stroke="#fff" strokeWidth="1.300">
          <path d="M.5 6.500L6 1l5.500 5.500" />
        </svg>
      </button>
      <svg className="ml-[10px] h-3 w-4" viewBox="0 0 16 12">
        <path d="M3 7a4 4 0 0 1 5-5.500 4 4 0 0 1 5 3L8 9z" fill="#aaa" />
        <path d="M2.500 11.500a2.500 2.500 0 0 1 1-5c2-1.500 4-1 5 .2 3-2 7 0 7.300 2.500 0 1.500-1 2.300-2 2.300z" fill="#fff" />
      </svg>
      <svg className="ml-2 size-4" viewBox="0 0 16 16" fill="none" stroke="#fff">
        <path d="M.5 5.500H3l3-3v11l-3-3H.5zM8.500 5.500c1 1.500 1 3.500 0 5M10.800 3.800c2 2.500 2 6 0 8.500M13 2c3 3.500 3 8.500 0 12" />
      </svg>
      <div className="ml-2 w-[56px] text-center text-xs leading-[18px] whitespace-nowrap">
        <p>7:41 PM</p>
        <p>6/22/2020</p>
      </div>
      <button aria-label="Notifications" className="relative mr-[12px] ml-4">
        <svg className="h-6 w-6" viewBox="0 0 24 24">
          <path d="M0 1h16v12H8l-4 4v-4H0z" fill="#fff" />
          <path d="M3 4h10M3 7h10M3 10h6" stroke="#1d1b1a" />
        </svg>
        <span className="absolute -right-px -bottom-px flex size-[17px] items-center justify-center rounded-full border border-[#999] bg-[#333] text-[11px] leading-none font-bold">
          2
        </span>
      </button>
      <span className="mr-1 h-10 w-px bg-[#777]" />
    </div>
  </footer>
);

const App = () => (
  <div className="flex min-h-screen flex-col overflow-hidden bg-[#f7f7f7] font-['Open_Sans',sans-serif] text-[#222]">
    <TabStrip />
    <AddressBar />
    <AppHeader />
    <RibbonTabs />
    <Ribbon />
    <FormulaBar />
    <div className="flex">
      <Worksheet />
      <ToolPak />
      <div className="w-10 shrink-0 bg-[#efefef]">
        <button aria-label="Expand pane" className="mt-[27px] ml-4">
          <svg className="h-[11px] w-[7px]" viewBox="0 0 7 11" fill="none" stroke="#666" strokeWidth="2">
            <path d="M1 .7l4.800 4.800L1 10.300" />
          </svg>
        </button>
      </div>
    </div>
    <StatusBar />
    <DownloadBar />
    <Taskbar />
  </div>
);

export default App;
